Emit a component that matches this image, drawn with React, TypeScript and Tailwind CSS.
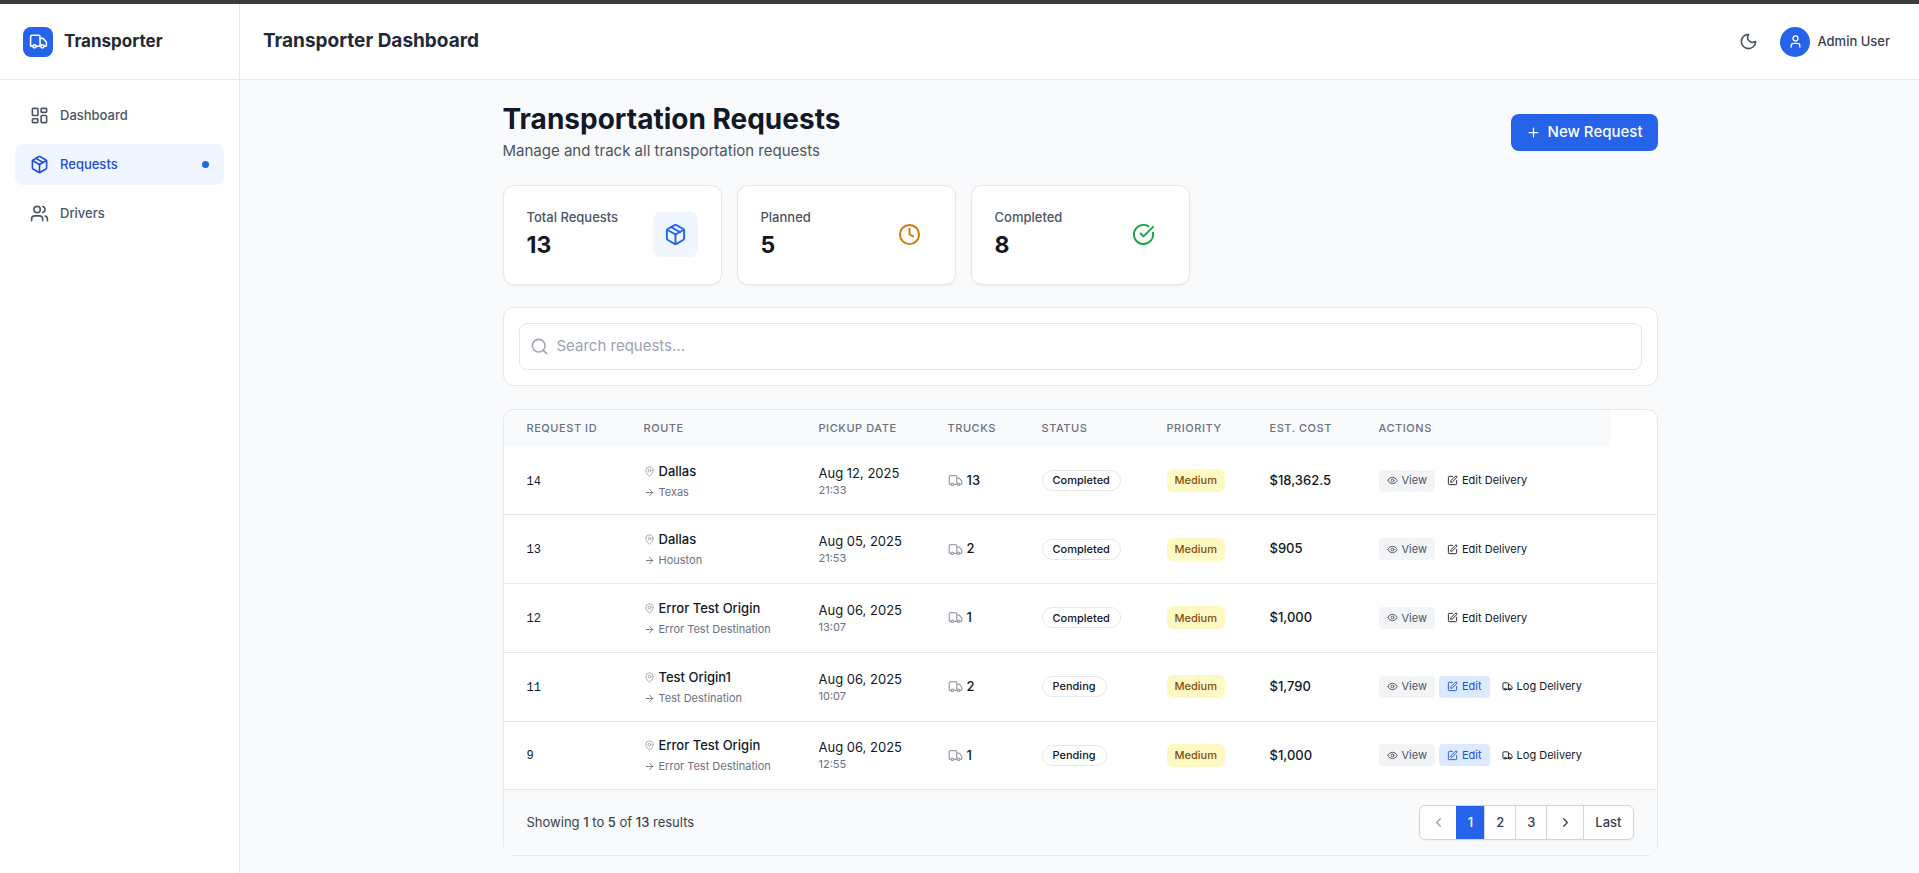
import { ReactNode } from "react";
import {
  ArrowRight,
  ChevronLeft,
  ChevronRight,
  CircleCheckBig,
  Clock,
  Eye,
  LayoutDashboard,
  LucideIcon,
  MapPin,
  Moon,
  Package,
  Plus,
  Search,
  SquarePen,
  Truck,
  User,
  Users,
} from "lucide-react";

type Status = "Completed" | "Pending";

type Request = {
  id: number;
  from: string;
  to: string;
  date: string;
  time: string;
  trucks: number;
  status: Status;
  cost: string;
};

const requests: Request[] = [
  { id: 14, from: "Dallas", to: "Texas", date: "Aug 12, 2025", time: "21:33", trucks: 13, status: "Completed", cost: "$18,362.5" },
  { id: 13, from: "Dallas", to: "Houston", date: "Aug 05, 2025", time: "21:53", trucks: 2, status: "Completed", cost: "$905" },
  { id: 12, from: "Error Test Origin", to: "Error Test Destination", date: "Aug 06, 2025", time: "13:07", trucks: 1, status: "Completed", cost: "$1,000" },
  { id: 11, from: "Test Origin1", to: "Test Destination", date: "Aug 06, 2025", time: "10:07", trucks: 2, status: "Pending", cost: "$1,790" },
  { id: 9, from: "Error Test Origin", to: "Error Test Destination", date: "Aug 06, 2025", time: "12:55", trucks: 1, status: "Pending", cost: "$1,000" },
];

const columns = ["Request ID", "Route", "Pickup Date", "Trucks", "Status", "Priority", "Est. Cost", "Actions"];

function NavItem({ icon: Icon, label, active = false }: { icon: LucideIcon; label: string; active?: boolean }) {
  return (
    <a
      href="#"
      aria-current={active ? "page" : undefined}
      className={
        "flex h-[41px] items-center gap-[11px] rounded-lg px-[15px] text-[13px] font-medium " +
        (active ? "bg-[#eff6ff] text-[#1d4ed8]" : "text-[#4b5563]")
      }
    >
      <Icon size={19} />
      {label}
      {active && <span className="ml-auto size-[7px] rounded-full bg-[#2563eb]" />}
    </a>
  );
}

function StatCard({ label, value, icon: Icon, tone }: { label: string; value: number; icon: LucideIcon; tone: string }) {
  return (
    <div className="flex h-[100px] items-center justify-between rounded-[11px] border border-[#e5e7eb] bg-white px-[23px] pb-[2px] shadow-xs">
      <div>
        <p className="text-[13px] leading-[19px] font-medium text-[#4b5563]">{label}</p>
        <p className="mt-[3px] text-[23px] leading-[30px] font-bold text-[#111827]">{value}</p>
      </div>
      <div className={"flex size-[45px] items-center justify-center rounded-lg " + tone}>
        <Icon size={23} />
      </div>
    </div>
  );
}

function Cell({ children }: { children?: ReactNode }) {
  return <td className="pr-[22px] pl-[23px]">{children}</td>;
}

function ActionButton({ icon: Icon, label, tone }: { icon: LucideIcon; label: string; tone: string }) {
  return (
    <button type="button" className={"flex h-[22px] items-center gap-1 rounded px-2 text-[11px] whitespace-nowrap " + tone}>
      <Icon size={11} />
      {label}
    </button>
  );
}

function RequestRow({ request }: { request: Request }) {
  const pending = request.status === "Pending";
  return (
    <tr className="border-b border-[#e5e7eb] text-[13px] text-[#111827] last:border-b-0">
      <Cell>
        <span className="font-mono text-[12px] font-medium">{request.id}</span>
      </Cell>
      <Cell>
        <div className="flex items-center gap-1 leading-[19px] font-medium whitespace-nowrap">
          <MapPin size={11} className="text-[#9ca3af]" />
          {request.from}
        </div>
        <div className="mt-1 flex items-center gap-1 text-[11px] leading-[15px] whitespace-nowrap text-[#6b7280]">
          <ArrowRight size={11} />
          {request.to}
        </div>
      </Cell>
      <Cell>
        <div className="leading-[19px] whitespace-nowrap">{request.date}</div>
        <div className="text-[11px] leading-[15px] text-[#6b7280]">{request.time}</div>
      </Cell>
      <Cell>
        <div className="flex items-center gap-1 font-medium">
          <Truck size={15} className="text-[#9ca3af]" />
          {request.trucks}
        </div>
      </Cell>
      <Cell>
        <span className="inline-flex h-[21px] items-center rounded-full border border-[#e5e7eb] px-[10px] text-[11px] font-medium">
          {request.status}
        </span>
      </Cell>
      <Cell>
        <span className="inline-flex h-[23px] items-center rounded-md bg-[#fef9c3] px-2 text-[11px] font-medium text-[#854d0e]">
          Medium
        </span>
      </Cell>
      <Cell>
        <span className="font-medium">{request.cost}</span>
      </Cell>
      <Cell>
        <div className="flex gap-1">
          <ActionButton icon={Eye} label="View" tone="bg-[#f3f4f6] text-[#4b5563]" />
          {pending && <ActionButton icon={SquarePen} label="Edit" tone="bg-[#dbeafe] text-[#1d4ed8]" />}
          <ActionButton icon={pending ? Truck : SquarePen} label={pending ? "Log Delivery" : "Edit Delivery"} tone="text-[#111827]" />
        </div>
      </Cell>
      <td />
    </tr>
  );
}

function Pagination() {
  const cell = "flex h-full items-center justify-center border-l border-[#d1d5db]";
  return (
    <nav
      aria-label="Pagination"
      className="flex h-[35px] overflow-hidden rounded-md border border-[#d1d5db] bg-white text-[13px] font-medium text-[#374151] shadow-xs"
    >
      <button type="button" disabled aria-label="Previous page" className="flex w-9 items-center justify-center opacity-50">
        <ChevronLeft size={15} />
      </button>
      <button type="button" aria-current="page" className="w-7 bg-[#2563eb] text-white">
        1
      </button>
      <button type="button" className={cell + " w-[31px]"}>2</button>
      <button type="button" className={cell + " w-[31px]"}>3</button>
      <button type="button" aria-label="Next page" className={cell + " w-[37px]"}>
        <ChevronRight size={15} />
      </button>
      <button type="button" className={cell + " px-[11px]"}>Last</button>
    </nav>
  );
}

export default function App() {
  return (
    <div className="flex min-h-screen flex-col border-t-4 border-[#3c3c3c] bg-[#f9fafb] font-['Inter',sans-serif] text-[#111827]">
      <div className="flex flex-1">
        <aside className="w-60 shrink-0 border-r border-[#e5e7eb] bg-white">
          <div className="flex h-[76px] items-center gap-[11px] border-b border-[#e5e7eb] px-[23px]">
            <span className="flex size-[30px] items-center justify-center rounded-lg bg-[#2563eb] text-white">
              <Truck size={19} />
            </span>
            <span className="text-[17px] font-bold text-[#1f2937]">Transporter</span>
          </div>
          <nav className="flex flex-col gap-2 px-[15px] pt-[15px]">
            <NavItem icon={LayoutDashboard} label="Dashboard" />
            <NavItem icon={Package} label="Requests" active />
            <NavItem icon={Users} label="Drivers" />
          </nav>
        </aside>

        <div className="min-w-0 flex-1">
          <header className="flex h-[76px] items-center justify-between border-b border-[#e5e7eb] bg-white pr-[29px] pl-[23px]">
            <h1 className="text-[19px] font-bold text-[#1f2937]">Transporter Dashboard</h1>
            <div className="flex items-center gap-[15px]">
              <button type="button" aria-label="Toggle dark mode" className="flex size-[34px] items-center justify-center text-[#4b5563]">
                <Moon size={19} />
              </button>
              <div className="flex items-center gap-[7px] text-[13px] font-medium text-[#374151]">
                <span className="flex size-[30px] items-center justify-center rounded-full bg-[#2563eb] text-white">
                  <User size={15} />
                </span>
                Admin User
              </div>
            </div>
          </header>

          <main className="mx-auto max-w-[1200px] pt-[22px] pr-[22px] pb-4 pl-[23px]">
            <div className="flex items-center justify-between">
              <div>
                <h2 className="text-[28px] leading-[34px] font-bold">Transportation Requests</h2>
                <p className="mt-1 text-[15px] leading-[22px] text-[#4b5563]">Manage and track all transportation requests</p>
              </div>
              <button type="button" className="flex h-[37px] items-center gap-[7px] rounded-lg bg-[#2563eb] px-[15px] text-[15px] font-medium text-white">
                <Plus size={15} />
                New Request
              </button>
            </div>

            <section className="mt-[23px] grid grid-cols-5 gap-[15px]">
              <StatCard label="Total Requests" value={13} icon={Package} tone="bg-[#eff6ff] text-[#2563eb]" />
              <StatCard label="Planned" value={5} icon={Clock} tone="text-[#d97706]" />
              <StatCard label="Completed" value={8} icon={CircleCheckBig} tone="text-[#16a34a]" />
            </section>

            <section className="mt-[22px] rounded-[11px] border border-[#e5e7eb] bg-white p-[15px]">
              <label className="flex h-[47px] items-center gap-2 rounded-lg border border-[#e5e7eb] px-[10px]">
                <Search size={19} className="text-[#9ca3af]" />
                <input
                  type="text"
                  aria-label="Search requests"
                  placeholder="Search requests..."
                  className="flex-1 text-[15px] outline-none placeholder:text-[#9ca3af]"
                />
              </label>
            </section>

            <section className="mt-[23px] rounded-[11px] border border-[#e5e7eb] bg-white">
              <table className="h-[379px] w-full table-fixed border-collapse overflow-hidden rounded-t-[10px] text-left">
                <colgroup>
                  <col className="w-[117px]" />
                  <col className="w-[175px]" />
                  <col className="w-[129px]" />
                  <col className="w-[94px]" />
                  <col className="w-[125px]" />
                  <col className="w-[103px]" />
                  <col className="w-[109px]" />
                  <col className="w-[255px]" />
                  <col />
                </colgroup>
                <thead>
                  <tr className="h-[37px]">
                    {columns.map((column) => (
                      <th
                        key={column}
                        className="bg-[#f9fafb] pr-[22px] pl-[23px] text-[11px] font-medium tracking-wider whitespace-nowrap text-[#6b7280] uppercase first:rounded-tl-[10px]"
                      >
                        {column}
                      </th>
                    ))}
                    <td />
                  </tr>
                </thead>
                <tbody>
                  {requests.map((request) => (
                    <RequestRow key={request.id} request={request} />
                  ))}
                </tbody>
              </table>
              <footer className="flex h-[66px] items-center justify-between border-t border-[#e5e7eb] bg-[#f9fafb] px-[23px]">
                <p className="text-[13px] text-[#374151]">
                  Showing <span className="font-medium">1</span> to <span className="font-medium">5</span> of{" "}
                  <span className="font-medium">13</span> results
                </p>
                <Pagination />
              </footer>
            </section>
          </main>
        </div>
      </div>
    </div>
  );
}
